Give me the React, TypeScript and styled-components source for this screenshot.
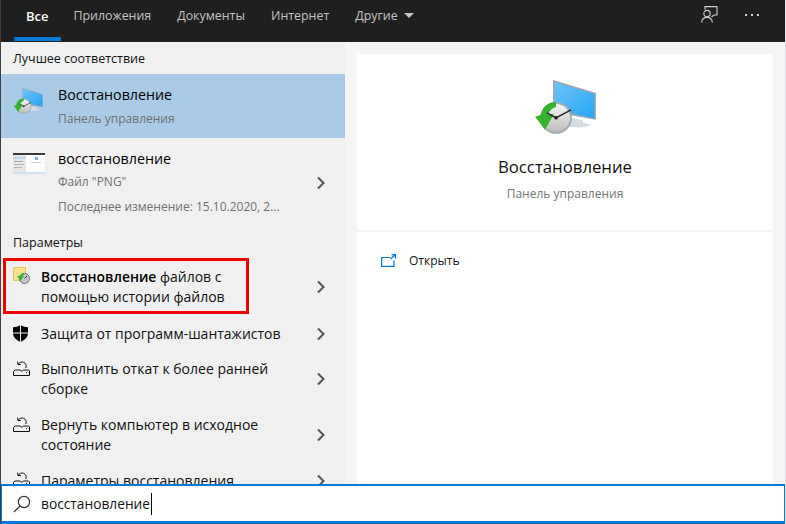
import { ReactNode } from 'react';
import styled, { createGlobalStyle } from 'styled-components';

const GlobalStyle = createGlobalStyle`
  html, body {
    margin: 0;
    padding: 0;
    background: #f5f5f5;
  }
  * {
    box-sizing: border-box;
  }
`;

const Window = styled.div`
  width: 786px;
  height: 524px;
  overflow: hidden;
  display: flex;
  flex-direction: column;
  font-family: "Open Sans", "Noto Sans", sans-serif;
  font-size: 13px;
  color: #111;
  background: #f5f5f5;
  border-left: 1px solid #3f4042;
  border-right: 1px solid #dfe3e6;
`;

const TopBar = styled.div`
  flex: 0 0 42px;
  display: flex;
  align-items: flex-start;
  padding-left: 13px;
  background: #1f1f1f;
`;

const Tab = styled.div<{ $active?: boolean }>`
  height: 41px;
  padding: 7px ${p => (p.$active ? 12 : 13)}px 0;
  display: flex;
  gap: 6px;
  font-size: ${p => (p.$active ? 13 : 12.4)}px;
  line-height: 18px;
  font-weight: ${p => (p.$active ? 600 : 400)};
  color: ${p => (p.$active ? '#fff' : '#c4c4c4')};
  border-bottom: 4px solid ${p => (p.$active ? '#0078d7' : 'transparent')};
`;

const Caret = styled.span`
  width: 0;
  height: 0;
  margin-top: 6px;
  border-left: 5px solid transparent;
  border-right: 5px solid transparent;
  border-top: 5px solid #c4c4c4;
`;

const BarActions = styled.div`
  margin-left: auto;
  display: flex;
  align-items: flex-start;
  gap: 26px;
  padding: 6px 25px 0 0;
  color: #d0d0d0;
`;

const Main = styled.div`
  flex: 1;
  min-height: 0;
  display: grid;
  grid-template-columns: 344px 1fr;
`;

const LeftPanel = styled.div`
  background: #f0f0f0;
  overflow: hidden;
  position: relative;
`;

const SectionTitle = styled.div<{ $height: number }>`
  height: ${p => p.$height}px;
  padding-left: 12px;
  display: flex;
  align-items: center;
  font-size: 12.5px;
  color: #111;
`;

const Row = styled.div<{ $selected?: boolean; $height: number; $left?: number }>`
  height: ${p => p.$height}px;
  display: grid;
  grid-template-columns: ${p => p.$left ?? 40}px 1fr 32px;
  align-items: center;
  background: ${p => (p.$selected ? '#a9cbe7' : 'transparent')};
`;

const IconCell = styled.div<{ $top?: number }>`
  padding-left: 12px;
  align-self: start;
  padding-top: ${p => p.$top ?? 0}px;
  display: flex;
`;

const RowBody = styled.div<{ $bottom?: number }>`
  padding-bottom: ${p => p.$bottom ?? 0}px;
`;

const RowText = styled.div`
  font-size: 14px;
  line-height: 20px;
  color: #111;
  white-space: nowrap;
`;

const BigTitle = styled.div`
  font-size: 14.25px;
  line-height: 22px;
  color: #000;
`;

const SubText = styled.div<{ $top?: number }>`
  font-size: 12px;
  line-height: 18px;
  color: #6f6f6f;
  margin-top: ${p => p.$top ?? 0}px;
`;

const Strong = styled.span`
  font-weight: 600;
  font-size: 13.9px;
  color: #000;
`;

const ChevronCell = styled.div`
  display: flex;
  padding-left: 3px;
  color: #555;
`;

// red annotation drawn over the screenshot
const Highlight = styled.div`
  position: absolute;
  left: 2px;
  top: 216px;
  width: 246px;
  height: 56px;
  border: 3px solid #f00000;
`;

const RightPanel = styled.div`
  padding: 12px 12px 0;
  display: flex;
  flex-direction: column;
  gap: 2px;
`;

const PreviewCard = styled.div`
  height: 176px;
  background: #fff;
  display: flex;
  flex-direction: column;
  align-items: center;
  padding-top: 26px;
`;

const PreviewTitle = styled.div`
  margin-top: 19px;
  font-size: 16.75px;
  line-height: 24px;
  color: #111;
`;

const PreviewSub = styled.div`
  margin-top: 6px;
  font-size: 12px;
  line-height: 18px;
  color: #757575;
`;

const ActionCard = styled.div`
  flex: 1;
  background: #fff;
  padding: 20px 24px;
`;

const ActionRow = styled.div`
  display: flex;
  align-items: center;
  gap: 13px;
  font-size: 12px;
  line-height: 18px;
  color: #111;
`;

const SearchBar = styled.div`
  flex: 0 0 40px;
  margin-left: -1px;
  margin-right: -1px;
  border: 2px solid #0078d7;
  border-bottom-width: 3px;
  background: #fff;
  display: flex;
  align-items: center;
  padding-left: 11px;
  gap: 10px;
`;

const SearchValue = styled.div`
  font-size: 13.75px;
  line-height: 22px;
  padding-right: 1px;
  border-right: 1px solid #000;
  color: #111;
`;

const Chevron = () => (
  <svg width="10" height="14" viewBox="0 0 10 14" fill="none">
    <path d="M2 1.5 L7.5 7 L2 12.5" stroke="currentColor" strokeWidth="2" />
  </svg>
);

const RecoveryIcon = ({ size, id }: { size: number; id: string }) => (
  <svg width={size} height={size * 0.9} viewBox="0 0 62 56">
    <defs>
      <linearGradient id={`${id}-screen`} x1="0" y1="0" x2="1" y2="1">
        <stop offset="0" stopColor="#6cc4fb" />
        <stop offset="1" stopColor="#26a4f3" />
      </linearGradient>
      <linearGradient id={`${id}-clock`} x1="0" y1="0" x2="0" y2="1">
        <stop offset="0" stopColor="#f6f6f6" />
        <stop offset="1" stopColor="#bdbdbd" />
      </linearGradient>
    </defs>
    <path d="M19 0 L62 13 L62 40 L19 32 Z" fill="#9aa5ad" />
    <path d="M20.5 2 L60.5 14 L60.5 38.5 L20.5 30 Z" fill={`url(#${id}-screen)`} />
    <path d="M36 38 L49 40.5 L49 43 L57 45 Q50 49 36 47 Z" fill="#d5dbdf" />
    <circle cx="22" cy="38" r="16" fill="#a4adb2" />
    <circle cx="22" cy="38" r="14" fill={`url(#${id}-clock)`} />
    <path d="M22 22 C13 22 8 28 7 35 L1 37 L11 50 L20 34 L14 35 C15 31 18 28 22 27 Z" fill="#35b52f" />
    <path d="M13 33 L22 38 L37 30" stroke="#222" strokeWidth="1.5" fill="none" />
    <circle cx="22" cy="38" r="1.8" fill="#222" />
  </svg>
);

const FileThumb = () => (
  <svg width="32" height="21" viewBox="0 0 32 21">
    <rect width="32" height="21" fill="#fff" />
    <rect width="32" height="2" fill="#3a3a3a" />
    <rect y="2" width="13" height="17" fill="#e4e6e8" />
    <rect y="4" width="13" height="2" fill="#bcd6ea" />
    <rect x="1" y="8" width="9" height="1" fill="#a9a9a9" />
    <rect x="1" y="11" width="10" height="1" fill="#b4b4b4" />
    <rect x="1" y="14" width="8" height="1" fill="#b4b4b4" />
    <rect x="22" y="4" width="3" height="3" fill="#7fb5e0" />
    <rect x="18" y="9" width="10" height="1" fill="#d0d0d0" />
    <rect y="19" width="32" height="2" fill="#cfe2f2" />
  </svg>
);

const HistoryIcon = () => (
  <svg width="17" height="17" viewBox="0 0 17 17">
    <path d="M0.5 0.5 H12.5 V13.5 H0.5 Z" fill="#f8e08e" stroke="#e6c65a" />
    <circle cx="11.5" cy="11.5" r="5" fill="#c4c8ca" stroke="#6d7275" />
    <path d="M11.5 11.5 L14 9" stroke="#333" />
    <path d="M11 6 A5 5 0 0 0 6.5 9 L4 9 L7.5 14 L11 9 L9 9 A3 3 0 0 1 11 8 Z" fill="#35b52f" />
  </svg>
);

const ShieldIcon = () => (
  <svg width="15" height="17" viewBox="0 0 15 17">
    <path d="M7.5 0 C10 1.6 12.5 2.2 15 2.2 V8 C15 12 12 15 7.5 17 C3 15 0 12 0 8 V2.2 C2.5 2.2 5 1.6 7.5 0 Z" fill="#000" />
    <path d="M7.5 0 V17 M0 8 H15" stroke="#f0f0f0" strokeWidth="1" />
  </svg>
);

const RestoreIcon = () => (
  <svg width="17" height="15" viewBox="0 0 17 15" fill="none" stroke="#111" strokeWidth="1">
    <path d="M5.2 3.4 A4.2 4.2 0 1 1 12.8 7" />
    <path d="M4.6 0.6 L5 3.6 L8 3.4" />
    <path d="M4 9 H7 C8 10.4 9.6 10.4 10.6 9 H15.5 L16.5 10 V14.5 H0.5 V10.5 L2 9 H4" />
    <rect x="13" y="11" width="1" height="1" fill="#111" stroke="none" />
  </svg>
);

const SearchIcon = () => (
  <svg width="18" height="18" viewBox="0 0 18 18" fill="none" stroke="#333" strokeWidth="1.2">
    <circle cx="11" cy="7" r="5.6" />
    <path d="M7 11 L1 17" />
  </svg>
);

const OpenIcon = () => (
  <svg width="15" height="14" viewBox="0 0 15 14" fill="none" stroke="#0078d7" strokeWidth="1.2">
    <path d="M9 3.5 H0.6 V12.4 H13 V6.5" />
    <path d="M9.5 5 L14 0.8 M10.5 0.6 H14.4 V4.5" />
  </svg>
);

const FeedbackIcon = () => (
  <svg width="17" height="17" viewBox="0 0 17 17" fill="none" stroke="currentColor" strokeWidth="1.1">
    <path d="M4 3.5 V0.6 H16 V9 H13 L10.5 11" />
    <circle cx="6" cy="7.6" r="3.2" />
    <path d="M0.6 16.5 C0.8 13 3 11.4 6 11.4 C9 11.4 11 13 11.4 16.5" />
  </svg>
);

const MoreIcon = () => (
  <svg width="16" height="18" viewBox="0 0 16 18" fill="#d0d0d0">
    <rect x="1" y="8" width="2" height="2" />
    <rect x="7" y="8" width="2" height="2" />
    <rect x="13" y="8" width="2" height="2" />
  </svg>
);

const SettingRow = ({ icon, height, iconTop, children }: { icon: ReactNode; height: number; iconTop: number; children: ReactNode }) => (
  <Row $height={height}>
    <IconCell $top={iconTop}>{icon}</IconCell>
    <RowText>{children}</RowText>
    <ChevronCell><Chevron /></ChevronCell>
  </Row>
);

export default function App() {
  return (
    <>
      <GlobalStyle />
      <Window>
        <TopBar>
          <Tab $active>Все</Tab>
          <Tab>Приложения</Tab>
          <Tab>Документы</Tab>
          <Tab>Интернет</Tab>
          <Tab>Другие<Caret /></Tab>
          <BarActions>
            <FeedbackIcon />
            <MoreIcon />
          </BarActions>
        </TopBar>
        <Main>
          <LeftPanel>
            <SectionTitle $height={32}>Лучшее соответствие</SectionTitle>
            <Row $selected $height={64} $left={57}>
              <IconCell $top={14}><RecoveryIcon size={30} id="small" /></IconCell>
              <RowBody>
                <BigTitle>Восстановление</BigTitle>
                <SubText $top={4}>Панель управления</SubText>
              </RowBody>
            </Row>
            <Row $height={89} $left={57}>
              <IconCell $top={15}><FileThumb /></IconCell>
              <RowBody $bottom={2}>
                <BigTitle>восстановление</BigTitle>
                <SubText $top={3}>Файл "PNG"</SubText>
                <SubText $top={7}>Последнее изменение: 15.10.2020, 2...</SubText>
              </RowBody>
              <ChevronCell><Chevron /></ChevronCell>
            </Row>
            <SectionTitle $height={31}>Параметры</SectionTitle>
            <SettingRow height={58} iconTop={9} icon={<HistoryIcon />}>
              <Strong>Восстановление</Strong> файлов с<br />помощью истории файлов
            </SettingRow>
            <SettingRow height={35} iconTop={9} icon={<ShieldIcon />}>
              Защита от программ-шантажистов
            </SettingRow>
            <SettingRow height={56} iconTop={10} icon={<RestoreIcon />}>
              Выполнить откат к более ранней<br />сборке
            </SettingRow>
            <SettingRow height={56} iconTop={10} icon={<RestoreIcon />}>
              Вернуть компьютер в исходное<br />состояние
            </SettingRow>
            <SettingRow height={36} iconTop={9} icon={<RestoreIcon />}>
              Параметры восстановления
            </SettingRow>
            <Highlight />
          </LeftPanel>
          <RightPanel>
            <PreviewCard>
              <RecoveryIcon size={62} id="big" />
              <PreviewTitle>Восстановление</PreviewTitle>
              <PreviewSub>Панель управления</PreviewSub>
            </PreviewCard>
            <ActionCard>
              <ActionRow><OpenIcon />Открыть</ActionRow>
            </ActionCard>
          </RightPanel>
        </Main>
        <SearchBar>
          <SearchIcon />
          <SearchValue>восстановление</SearchValue>
        </SearchBar>
      </Window>
    </>
  );
}
